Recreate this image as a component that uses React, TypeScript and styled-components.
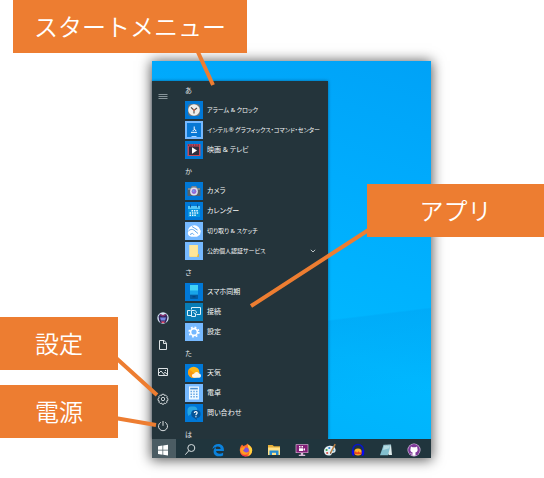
import React from 'react';
import styled, { createGlobalStyle } from 'styled-components';

const GlobalStyle = createGlobalStyle`
  * { box-sizing: border-box; }
  body {
    margin: 0;
    background: #fff;
    font-family: "Noto Sans", "Noto Sans CJK JP", sans-serif;
  }
  button { font-family: inherit; }
`;

const Figure = styled.main`
  position: relative;
  min-height: 100vh;
  padding: 61px 113px 20px 152px;
`;

const Desktop = styled.section`
  display: flex;
  flex-direction: column;
  background: linear-gradient(173deg, transparent 65%, rgba(0, 160, 240, 0.4) 65.4%, transparent 85%),
    linear-gradient(200deg, #00a2f7 0%, #00acfd 30%, #00b8ff 65%, #00aef8 100%);
  box-shadow: 0 1px 12px 1px rgba(0, 0, 0, 0.66);
`;

const StartMenu = styled.div`
  display: flex;
  width: 176px;
  height: 358px;
  margin-top: 20px;
  background: #24343b;
  box-shadow: 0 0 3px rgba(0, 30, 60, 0.5);
`;

const Rail = styled.nav`
  display: flex;
  flex-direction: column;
  width: 22px;
  padding-top: 1px;
`;

const RailButton = styled.button<{ $last?: boolean }>`
  display: flex;
  align-items: center;
  justify-content: center;
  height: 27px;
  padding: 0;
  border: 0;
  background: none;
  margin-bottom: ${(p) => (p.$last ? 'auto' : '0')};

  svg { display: block; width: 12px; height: 12px; }
`;

const AppList = styled.div`
  display: flex;
  flex: 1;
  flex-direction: column;
  gap: 2px;
  min-width: 0;
  padding: 0 8px 0 11px;
  overflow: hidden;
`;

const Group = styled.section`
  flex-shrink: 0;
`;

const GroupTitle = styled.h2`
  height: 19px;
  margin: 0;
  color: #e3e7e8;
  font-size: 7px;
  font-weight: 400;
  line-height: 19px;
`;

const AppRow = styled.button<{ $compact?: boolean }>`
  display: flex;
  align-items: center;
  width: 100%;
  height: 20px;
  padding: 0;
  border: 0;
  background: none;
  color: #f6f8f8;
  font-size: ${(p) => (p.$compact ? 6 : 7)}px;
  line-height: 18px;
  text-align: left;
  white-space: nowrap;
`;

const AppName = styled.span`
  flex: 1;
  min-width: 0;
  margin-left: 4px;
  font-feature-settings: "palt";
`;

const Tile = styled.span<{ $color: string }>`
  flex: none;
  width: 18px;
  height: 18px;
  background: ${(p) => p.$color};

  svg { display: block; width: 18px; height: 18px; }
`;

const Chevron = styled.svg`
  width: 6px;
  height: 6px;
  margin-right: 4px;
`;

const Taskbar = styled.nav`
  display: flex;
  height: 19px;
  background: #20353d;
`;

const TaskButton = styled.button<{ $start?: boolean }>`
  display: flex;
  align-items: center;
  justify-content: center;
  width: ${(p) => (p.$start ? 24 : 28)}px;
  padding: ${(p) => (p.$start ? '2px 2px 0 0' : '2px 0 0')};
  border: 0;
  background: ${(p) => (p.$start ? '#4b5c63' : 'none')};

  svg { display: block; width: 14px; height: 14px; }
`;

const Pointers = styled.svg`
  position: absolute;
  top: 0;
  left: 0;
  width: 544px;
  height: 478px;
  pointer-events: none;
`;

const Callout = styled.div<{ $top: number; $left: number; $width?: number }>`
  position: absolute;
  top: ${(p) => p.$top}px;
  left: ${(p) => p.$left}px;
  ${(p) => (p.$width ? `width: ${p.$width}px;` : 'right: 0;')}
  height: 53px;
  background: #ed7d31;
  color: #fff;
  font-size: 24px;
  font-weight: 350;
  line-height: 51px;
  text-align: center;
  white-space: nowrap;
  font-family: "Noto Sans CJK JP", sans-serif;
`;

const tileArt: Record<string, React.ReactNode> = {
  clock: (
    <>
      <rect x="3" y="3" width="12" height="12" rx="3" fill="#68737b" />
      <circle cx="9" cy="9" r="5.8" fill="#f1eeea" />
      <path d="M6 6.3 9 9.2 12 7M9 9.2v3.3" stroke="#4d4542" strokeWidth="1.1" fill="none" />
      <circle cx="9" cy="9" r="1" fill="#ce6b4c" />
    </>
  ),
  intel: (
    <>
      <rect x="2" y="2" width="14" height="14" fill="#0878d4" />
      <path d="M9.2 5.5v3L7.7 10M9.4 8l1.7 2M6 11.3h6" stroke="#fff" strokeWidth="1" fill="none" />
      <path d="M6.5 15.5h5" stroke="#a9d5ff" strokeWidth="1" />
    </>
  ),
  movie: (
    <>
      <rect x="2.5" y="3" width="13" height="12" fill="#c64a58" />
      <rect x="4" y="5.5" width="10" height="8.5" fill="#302d3e" />
      <path d="M3 4.2h12" stroke="#5b2744" strokeWidth="1.2" strokeDasharray="1.3 1.1" />
      <path d="M7 6.3 12 9.5 7 12.7z" fill="#fff" />
    </>
  ),
  camera: (
    <>
      <path d="M2.5 6h3L7 4h4l1.5 2h3v8h-13z" fill="#56616b" />
      <path d="M3 6h2.6L7 4h4l1.3 2H15v2H3z" fill="#7c8790" />
      <circle cx="9" cy="9.5" r="3.9" fill="#dedeec" />
      <circle cx="9" cy="9.5" r="2.4" fill="#9268d7" />
      <circle cx="8.5" cy="9" r="1" fill="#66a9f0" />
    </>
  ),
  calendar: (
    <>
      <rect x="3" y="4" width="12" height="11" fill="#0794df" />
      <path d="M3 4h12v3H3z" fill="#55c5f6" />
      <path d="M5.5 2.5v3M12.5 2.5v3" stroke="#0d5397" strokeWidth="1" />
      <path d="M6.5 8.8h7M4.5 11h9M4.5 13.2h7" stroke="#e4f8ff" strokeWidth="1.5" strokeDasharray="1.5 .9" />
    </>
  ),
  snip: (
    <>
      <path d="M3 9.5a6.2 6.2 0 0 1 10.7-4.2L15.8 9l-.8 3.8-3 2H6.2A4.5 4.5 0 0 1 3 9.5z" fill="#fff" />
      <path d="M3 9.5c2-2.5 5-2.8 7-.5l3 2.5M7 4.5l5.5 3.5M5 12.5l2.5-1.2 1.5 1.5" stroke="#5ba5ed" strokeWidth="1" fill="none" />
    </>
  ),
  folder: (
    <>
      <path d="M4.5 3H13v9.5l1 .7V15H4.5z" fill="#fbdf85" />
      <path d="M4.5 3h8v11h-8z" fill="#ffe69a" />
      <path d="M13 12h1v3h-2z" fill="#d8b451" />
    </>
  ),
  phone: (
    <>
      <rect x="5" y="2" width="8" height="14" rx=".7" fill="#045a9e" />
      <path d="M5 2h8v6H5z" fill="#42d2f5" />
      <path d="M5 7.5h8v4.2H5z" fill="#18a4e9" />
      <path d="M7.5 13.8h3" stroke="#043f7c" />
    </>
  ),
  connect: (
    <g fill="none" stroke="#d9f1fa" strokeWidth="1">
      <path d="M6.5 6.5v-2h9v7h-4M5.5 7.5h-3v5h4" />
      <path d="M6.5 13.5v-6h3M6.5 13.5h4v-3" />
      <path d="M8.5 9.5 11 11.5M9.5 7.5c1.5.3 2 1.2 2 2.4" />
    </g>
  ),
  settings: (
    <>
      <circle cx="9" cy="9" r="4.8" fill="none" stroke="#fff" strokeWidth="1.6" strokeDasharray="1.8 1.97" />
      <circle cx="9" cy="9" r="3.4" fill="none" stroke="#fff" strokeWidth="1.6" />
    </>
  ),
  weather: (
    <>
      <circle cx="8.7" cy="8.4" r="5.7" fill="#ffb514" />
      <path d="M4 5.2a5.7 5.7 0 0 0 5 8.7l2.5-3z" fill="#fc9812" />
      <path d="M8.8 13.7a2 2 0 0 1 .2-4 2.8 2.8 0 0 1 5-.1 2.1 2.1 0 0 1 .5 4.1z" fill="#fff4e5" />
    </>
  ),
  calc: (
    <>
      <rect x="4" y="2.5" width="10" height="13" fill="#eef8ff" />
      <path d="M5.2 4.6h7.6" stroke="#4c8dce" strokeWidth="1.6" />
      <path d="M5.5 7.6h7M5.5 10.2h7M5.5 12.8h7" stroke="#68a6e5" strokeWidth="1.5" strokeDasharray="1.5 1.25" />
    </>
  ),
  help: (
    <>
      <path d="M2.5 9V6a3.7 3.7 0 0 1 3.7-3.5H9A3.7 3.7 0 0 1 12.3 6H9C7 6 6.2 8 6 10l-2.7 2z" fill="#29a5df" />
      <path d="M6.3 10a4 4 0 0 1 4-4h1.2a4 4 0 0 1 0 8.2l.6 2-3-2.3a4 4 0 0 1-2.8-3.9z" fill="#075496" />
      <path d="M9.3 9c.2-2 3.2-1.7 2.8.2-.2.9-1.2.9-1.2 2M10.9 12.2v1" stroke="#fff" strokeWidth="1.2" fill="none" />
    </>
  ),
};

type AppEntry = { name: string; art: string; color: string; folder?: boolean; compact?: boolean };

const BLUE = '#0078d7';
const PALE = '#76b9ff';

const groups: { title: string; apps: AppEntry[] }[] = [
  {
    title: 'あ',
    apps: [
      { name: 'アラーム & クロック', art: 'clock', color: BLUE, compact: true },
      { name: 'インテル® グラフィックス・コマンド・センター', art: 'intel', color: PALE, compact: true },
      { name: '映画 & テレビ', art: 'movie', color: BLUE },
    ],
  },
  {
    title: 'か',
    apps: [
      { name: 'カメラ', art: 'camera', color: BLUE },
      { name: 'カレンダー', art: 'calendar', color: BLUE },
      { name: '切り取り & スケッチ', art: 'snip', color: PALE, compact: true },
      { name: '公的個人認証サービス', art: 'folder', color: PALE, folder: true, compact: true },
    ],
  },
  {
    title: 'さ',
    apps: [
      { name: 'スマホ同期', art: 'phone', color: BLUE },
      { name: '接続', art: 'connect', color: '#087cb5' },
      { name: '設定', art: 'settings', color: PALE },
    ],
  },
  {
    title: 'た',
    apps: [
      { name: '天気', art: 'weather', color: BLUE },
      { name: '電卓', art: 'calc', color: PALE },
      { name: '問い合わせ', art: 'help', color: BLUE },
    ],
  },
  { title: 'は', apps: [] },
];

const railItems: { label: string; art: React.ReactNode }[] = [
  {
    label: 'アカウント',
    art: (
      <>
        <circle cx="6" cy="6" r="5.7" fill="#d7e6f5" />
        <path d="M1.5 4.5 3 2l3 1 3-1.3 1.5 3L10 8 8.5 11h-5L2 8z" fill="#34265f" />
        <path d="M3 5.5h6l-1 3H4z" fill="#7788e3" />
        <path d="M4 9.5h4L7 11H5z" fill="#ed5870" />
        <path d="M3 2.5 6 4l3-1.5" stroke="#a83674" fill="none" />
      </>
    ),
  },
  {
    label: 'ドキュメント',
    art: <path d="M2.5 1.5h4.7l2.3 2.7v6.3h-7zM6.5 1.5v3h3" fill="none" stroke="#dce1e3" />,
  },
  {
    label: 'ピクチャ',
    art: (
      <g fill="none" stroke="#dce1e3">
        <path d="M1.5 2.5h9v7h-9zM1.5 7.5 4 5l3.5 4M6.5 7.5 8 6.3l3 2.7" />
        <path d="M8 4.5h1" />
      </g>
    ),
  },
  {
    label: '設定',
    art: (
      <g fill="none" stroke="#dce1e3">
        <circle cx="6" cy="6" r="1.7" strokeWidth=".9" />
        <path d="m4.9 1.3 2.2 0 .4 1.2 1.2-.4 1.6 1.7-.6 1.1 1.2.6v1.9l-1.3.5.5 1.2-1.5 1.5-1.2-.6-.5 1.2H5l-.5-1.2-1.2.6-1.5-1.5.5-1.2L1 7.4V5.5l1.3-.6-.6-1.1 1.6-1.7 1.2.4z" strokeWidth=".9" />
      </g>
    ),
  },
  {
    label: '電源',
    art: <path d="M6 1v4.8M3.8 2.3a4.5 4.5 0 1 0 4.4 0" fill="none" stroke="#dce1e3" />,
  },
];

const taskItems: { label: string; art: React.ReactNode }[] = [
  {
    label: '検索',
    art: (
      <g fill="none" stroke="#d7dee0">
        <circle cx="8.3" cy="5" r="3.5" />
        <path d="M5.9 7.6 2.3 11.7" />
      </g>
    ),
  },
  {
    label: 'Edge',
    art: (
      <path
        d="M1.3 6.3C2 2.6 4.2.9 7.3.9c3.7 0 5.6 2.5 5.6 5.7v1.5H5.1c.2 3 4.2 3.3 7 1.7v2.7c-4.5 2-9.5.5-9.5-4.1 0-2 1-3.5 2.7-4.4C4.8 4.5 4.8 5.2 4.8 5.9h4.8C9.8 2.4 4.3 2.7 1.3 6.3z"
        fill="#0b82dc"
      />
    ),
  },
  {
    label: 'Firefox',
    art: (
      <>
        <path d="M2 3 3 1.5 4.4 3 7 2 8.5.6c.5 1.8 4.7 2.6 4.7 6.7A6.2 6.2 0 0 1 .8 7.5C.8 5.5 1.2 4 2 3z" fill="#ff6b2c" />
        <path d="M8.5.6c.5 1.8 4.7 2.6 4.7 6.7 0 3-2 5-4 5.7 2-3 1.5-5.5.3-7z" fill="#ffd23d" />
        <circle cx="7" cy="7.3" r="2.8" fill="#8450d8" />
        <path d="M1.3 6.5c1-2 3-2.6 5-1.9L5 6.5l-1 .8c1 2 3.5 3 6 1.3-1.5 4.7-8.5 3.5-8.7-2.1z" fill="#ff9d20" />
        <path d="M1.1 9.5c1.5 2.5 4 3 7 2.2L7 13.5c-3 0-5-1.5-5.9-4z" fill="#f1374f" />
      </>
    ),
  },
  {
    label: 'エクスプローラー',
    art: (
      <>
        <path d="M1 2h4.5L7 3.3h6V12H1z" fill="#e5ae38" />
        <path d="M1 4.5h12V12H1z" fill="#ffe187" />
        <path d="M2.5 7.5h9V12H9V9.8H5V12H2.5z" fill="#258bd0" />
      </>
    ),
  },
  {
    label: '画面録画',
    art: (
      <>
        <rect x=".7" y="1.3" width="12.6" height="8.7" fill="#e8c7e5" />
        <rect x="1.3" y="1.8" width="11.4" height="7.7" fill="#821f77" />
        <path d="M4 5.2h4.2v2.7H4zM8.4 6.2 10 5v3zM4 3h1.5v1.5H4zM6.5 3H8v1.5H6.5z" fill="#fff" />
        <path d="M5.8 10h2.4v1.8h2V13H3.8v-1.2h2z" fill="#d9bed9" />
      </>
    ),
  },
  {
    label: 'ペイント',
    art: (
      <>
        <path d="M1 8.3C1 4.8 4 2.7 7.5 2.8c3.5.1 5.4 2.4 5.1 5-.3 2-1.8 1.9-3 2.1-1.3.2-.5 2-2.6 2.5C4 13 1 11.5 1 8.3z" fill="#e6f0f5" />
        <circle cx="3.6" cy="7" r="1.1" fill="#3aa853" />
        <circle cx="6.3" cy="5" r="1.1" fill="#3188ce" />
        <circle cx="4.2" cy="10" r="1.1" fill="#d75349" />
        <circle cx="10.3" cy="7.5" r="1" fill="#5eaed1" />
        <path d="m7.4 10.2 4.8-9" stroke="#bd8244" strokeWidth="1.5" />
        <path d="m7 11.3.5-2 1 .6z" fill="#54392c" />
      </>
    ),
  },
  {
    label: 'Audacity',
    art: (
      <>
        <path d="M1.8 9V6.8a5.2 5.2 0 0 1 10.4 0V9" fill="none" stroke="#0815c9" strokeWidth="1.5" />
        <ellipse cx="7" cy="8.9" rx="3.8" ry="3.5" fill="#ffb327" />
        <path d="M3.3 9.2 5 8.2l1 1.5L7.5 8.3 9 9.7l1.7-1v2.6H3.5z" fill="#e94422" />
        <path d="M.8 7.3h2.4v5.4H1.8L.8 11zM10.8 7.3h2.4V11l-1 1.7h-1.4z" fill="#080bf0" />
      </>
    ),
  },
  {
    label: 'メモ帳',
    art: (
      <>
        <path d="M4.5 2 12 1.4l1 10.6H9.8z" fill="#dfecec" />
        <path d="m4.5 2 7.2-.2L9 12.2H1z" fill="#83bfce" />
        <path d="m5 2.4 6-.2-.7 3L4 7z" fill="#b5dce3" />
        <path d="M4.5 1.7h7.3" stroke="#526b76" strokeWidth=".8" strokeDasharray="1 .7" />
      </>
    ),
  },
  {
    label: 'GitHub',
    art: (
      <>
        <circle cx="7" cy="7" r="6.5" fill="#d9c3e2" />
        <circle cx="7" cy="7" r="5.9" fill="#7e3999" />
        <path d="M3.9 3.5 5.6 4.2h2.8l1.7-.7.3 2c.8 2.1-.2 3.6-2 3.9l.2 3.3H5.4l.2-3.3C3.8 9.1 2.8 7.6 3.6 5.5z" fill="#fff" />
        <path d="M5.4 11.2c-1.3.2-1.3-.8-2-1" stroke="#fff" strokeWidth=".8" fill="none" />
      </>
    ),
  },
];

function AppItem({ app }: { app: AppEntry }) {
  return (
    <AppRow type="button" $compact={app.compact}>
      <Tile $color={app.color}>
        <svg viewBox="0 0 18 18" aria-hidden="true">{tileArt[app.art]}</svg>
      </Tile>
      <AppName>{app.name}</AppName>
      {app.folder && (
        <Chevron viewBox="0 0 6 6" aria-hidden="true">
          <path d="M.8 1.8 3 4l2.2-2.2" fill="none" stroke="#cbd2d4" strokeWidth=".9" />
        </Chevron>
      )}
    </AppRow>
  );
}

export default function App() {
  return (
    <Figure lang="ja">
      <GlobalStyle />
      <Desktop>
        <StartMenu>
          <Rail>
            <RailButton type="button" aria-label="メニューを展開" $last>
              <svg viewBox="0 0 12 12"><path d="M1.5 4.5h9M1.5 6.5h9M1.5 8.5h9" stroke="#87949a" /></svg>
            </RailButton>
            {railItems.map((item) => (
              <RailButton type="button" key={item.label} aria-label={item.label}>
                <svg viewBox="0 0 12 12">{item.art}</svg>
              </RailButton>
            ))}
          </Rail>
          <AppList>
            {groups.map((group) => (
              <Group key={group.title}>
                <GroupTitle>{group.title}</GroupTitle>
                {group.apps.map((app) => <AppItem key={app.name} app={app} />)}
              </Group>
            ))}
          </AppList>
        </StartMenu>
        <Taskbar>
          <TaskButton type="button" aria-label="スタート" $start>
            <svg viewBox="0 0 14 14"><path d="M2 3.3 6.5 2.6v4.2H2zM7.2 2.5 12 1.8v5H7.2zM2 7.5h4.5v4.2L2 11zM7.2 7.5H12v5l-4.8-.7z" fill="#fff" /></svg>
          </TaskButton>
          {taskItems.map((item) => (
            <TaskButton type="button" key={item.label} aria-label={item.label}>
              <svg viewBox="0 0 14 14">{item.art}</svg>
            </TaskButton>
          ))}
        </Taskbar>
      </Desktop>
      <Pointers viewBox="0 0 544 478" aria-hidden="true">
        <path d="M197 50 213 85M370 229 251 306M115 357 157 395M115 418 156 425" fill="none" stroke="#ed7d31" strokeWidth="4" />
      </Pointers>
      <Callout $top={0} $left={13} $width={234}>スタートメニュー</Callout>
      <Callout $top={184} $left={367}>アプリ</Callout>
      <Callout $top={317} $left={0} $width={118}>設定</Callout>
      <Callout $top={385} $left={0} $width={118}>電源</Callout>
    </Figure>
  );
}
